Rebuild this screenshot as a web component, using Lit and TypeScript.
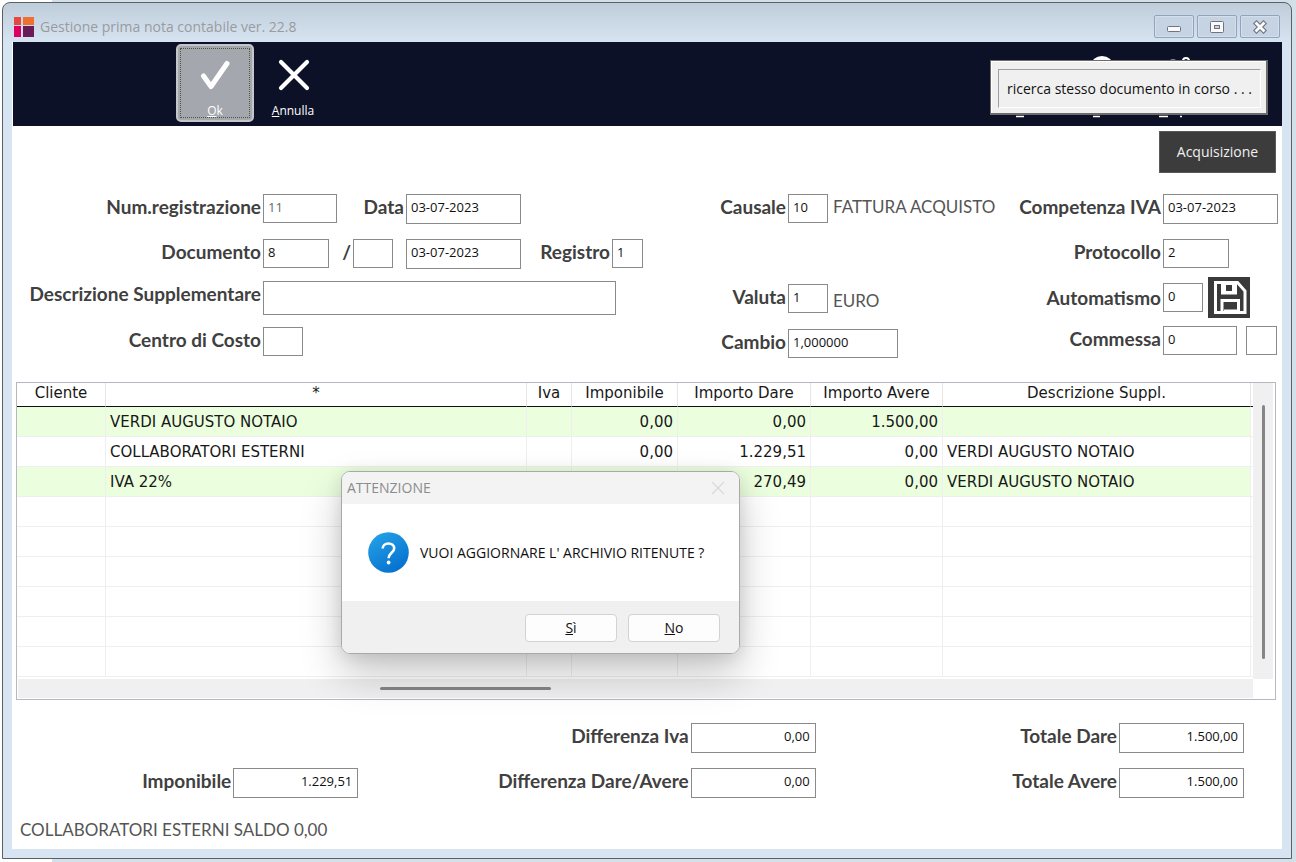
import { LitElement, html, css } from "lit";
import { customElement } from "lit/decorators.js";

interface Row {
  cliente: string;
  conto: string;
  iva: string;
  imponibile: string;
  dare: string;
  avere: string;
  descrizione: string;
}

const ROWS: Row[] = [
  { cliente: "", conto: "VERDI AUGUSTO NOTAIO", iva: "", imponibile: "0,00", dare: "0,00", avere: "1.500,00", descrizione: "" },
  { cliente: "", conto: "COLLABORATORI ESTERNI", iva: "", imponibile: "0,00", dare: "1.229,51", avere: "0,00", descrizione: "VERDI AUGUSTO NOTAIO" },
  { cliente: "", conto: "IVA 22%", iva: "", imponibile: "", dare: "270,49", avere: "0,00", descrizione: "VERDI AUGUSTO NOTAIO" },
];
const EMPTY: Row = { cliente: "", conto: "", iva: "", imponibile: "", dare: "", avere: "", descrizione: "" };
const VISIBLE_ROWS = 9;

@customElement("app-root")
export class AppRoot extends LitElement {
  static styles = css`
    :host {
      display: flex;
      min-height: 100vh;
      box-sizing: border-box;
      padding: 2px 4px 3px 2px;
      background: linear-gradient(90deg, #ffffff 52px, #d2e0ea 52px);
      font-family: Lato, "Liberation Sans", sans-serif;
      color: #404040;
    }
    * {
      box-sizing: border-box;
    }
    button,
    input {
      font: inherit;
      color: inherit;
      margin: 0;
    }
    .window {
      flex: 1;
      position: relative;
      display: flex;
      flex-direction: column;
      border: 1px solid #5c6064;
      border-radius: 8px 8px 0 0;
      background: linear-gradient(#bfcddb, #d7e4f1 40px);
      padding: 0 9px 9px;
    }
    .titlebar {
      display: flex;
      align-items: center;
      height: 39px;
      padding: 8px 2px 0 2px;
      flex: none;
    }
    .logo {
      width: 20px;
      height: 20px;
      margin-right: 6px;
    }
    .title {
      flex: 1;
      margin: 0;
      font: 400 14px/20px "Open Sans", "Noto Sans", sans-serif;
      color: #999b9f;
    }
    .controls {
      display: flex;
      gap: 3px;
    }
    .control {
      display: grid;
      place-items: center;
      width: 40px;
      height: 23px;
      padding: 0;
      border: 1px solid #93a2c0;
      border-radius: 2px;
      background: #c5d3e2;
      box-shadow: inset 0 0 0 1px #d3dfeb;
    }
    .client {
      flex: 1;
      display: flex;
      flex-direction: column;
      background: #ffffff;
    }
    .toolbar {
      display: flex;
      height: 84px;
      margin-left: 1px;
      padding: 2px 0 0 163px;
      background: #0c1127;
    }
    .tool {
      display: flex;
      flex-direction: column;
      align-items: center;
      justify-content: space-between;
      width: 78px;
      height: 78px;
      padding: 11px 0 1px;
      border: 2px solid transparent;
      border-radius: 5px;
      background: none;
      color: #ffffff;
      font: 400 12px/16px "Open Sans", "Noto Sans", sans-serif;
    }
    .tool.focused {
      position: relative;
      border-color: #c5c6ca;
      background: #a5a7af;
    }
    .tool.focused::after {
      content: "";
      position: absolute;
      inset: 2px;
      border: 1px dotted #4c5a3c;
    }
    .tool-icon {
      width: 36px;
      height: 36px;
    }
    .hidden-tools {
      width: 290px;
      height: 84px;
      margin: -2px 0 0 auto;
    }
    .actions {
      display: flex;
      justify-content: flex-end;
      padding: 5px 6px 0;
    }
    .acquire {
      width: 117px;
      height: 42px;
      border: 1px solid #5a5a5a;
      background: #3c3c3c;
      color: #f0f0f0;
      font: 400 14px/20px "Open Sans", "Noto Sans", sans-serif;
    }
    .form {
      display: flex;
      align-items: flex-start;
      padding: 21px 4px 0 0;
    }
    .group {
      display: flex;
      flex-direction: column;
    }
    .group.left {
      gap: 12px;
    }
    .group.middle {
      gap: 15px;
      margin-left: auto;
    }
    .group.right {
      gap: 8px;
      margin-left: 22px;
    }
    .line {
      display: flex;
      align-items: flex-start;
      min-height: 30px;
    }
    .line.tall {
      min-height: 33px;
    }
    .line.spaced {
      min-height: 37px;
    }
    .line.centered {
      align-items: center;
    }
    label,
    .slash {
      flex: none;
      padding-right: 2px;
      text-align: right;
      font-size: 19px;
      line-height: 26px;
      font-weight: 700;
      color: #404040;
      white-space: nowrap;
    }
    .left .lead { width: 251px; }
    .middle .lead { width: 70px; }
    .right .lead { width: 144px; }
    .for-date { width: 69px; }
    .for-register { width: 91px; }
    .slash { width: 24px; }
    input {
      height: 29px;
      min-width: 0;
      padding: 0 4px 4px;
      border: 1px solid #8a8a8a;
      border-radius: 0;
      background: #ffffff;
      color: #101010;
      outline: none;
      font: 400 13px/20px "Open Sans", "Noto Sans", sans-serif;
    }
    .readonly { color: #666a74; }
    .w31 { width: 31px; }
    .w40 { width: 40px; }
    .w66 { width: 66px; }
    .w75 { width: 74px; }
    .w110 { width: 110px; }
    .date { width: 115px; height: 30px; }
    .wide { width: 353px; height: 34px; }
    .gap { margin-left: 13px; }
    .after { margin-left: 9px; }
    .text {
      padding-left: 5px;
      font-size: 17px;
      line-height: 26px;
      color: #555555;
      white-space: nowrap;
    }
    .line.low .text { padding-top: 4px; }
    .middle .text { width: 169px; }
    .save {
      width: 42px;
      height: 41px;
      margin-left: 5px;
      padding: 0;
      border: 0;
      background: #3a3a3a;
    }
    .save svg { display: block; }
    .grid {
      display: grid;
      grid-template-columns: minmax(0, 1fr) 20px;
      grid-template-rows: auto 19px;
      margin: 23px 6px 0 4px;
      padding: 0 2px 1px 0;
      border: 1px solid #b6b7c0;
    }
    table {
      width: 100%;
      table-layout: fixed;
      border-collapse: separate;
      border-spacing: 0;
      margin-bottom: 2px;
      font-family: "DejaVu Sans", sans-serif;
      font-size: 15px;
      line-height: 20px;
      color: #181818;
    }
    th {
      height: 24px;
      padding: 0 0 3px;
      font-weight: 400;
      border-bottom: 1px solid #101010;
      border-right: 1px solid #e6e6e6;
      white-space: nowrap;
    }
    td {
      height: 30px;
      padding: 0 4px;
      border-bottom: 1px solid #efefef;
      border-right: 1px solid #efefef;
      white-space: nowrap;
    }
    th:last-child,
    td:last-child {
      border-right: 0;
      padding: 0;
    }
    .filled td:not(:last-child) { background: #ebffdf; }
    .num { text-align: right; }
    .c-cliente { width: 89px; }
    .c-iva { width: 45px; }
    .c-imponibile { width: 106px; }
    .c-dare { width: 133px; }
    .c-avere { width: 132px; }
    .c-descrizione { width: 308px; }
    .c-edge { width: 2px; }
    .vbar {
      padding: 22px 8px 20px 9px;
      background: #f0f0f0;
    }
    .hbar {
      padding: 8px 0 8px 362px;
      margin-left: 1px;
      background: #f0f0f0;
    }
    .thumb {
      border-radius: 2px;
      background: #858585;
    }
    .vbar .thumb { width: 3px; height: 100%; }
    .hbar .thumb { width: 171px; height: 3px; }
    .totals {
      display: grid;
      grid-template-columns: 346fr 457fr 428fr;
      row-gap: 15px;
      padding: 23px 38px 0 0;
    }
    .total {
      display: flex;
      justify-content: flex-end;
    }
    .total input {
      width: 125px;
      height: 30px;
      text-align: right;
      padding-right: 5px;
    }
    .status {
      margin: 17px 0 0;
      padding: 0 8px;
      font-size: 17px;
      line-height: 30px;
      color: #555555;
    }
    .notice {
      position: absolute;
      top: 57px;
      right: 23px;
      padding: 8px 5px 5px 7px;
      border: 1px solid #6c6c6c;
      border-right-width: 2px;
      border-bottom-width: 2px;
      background: #f0f0f0;
      box-shadow: inset 1px 1px 0 #ffffff;
    }
    .notice p {
      width: 263px;
      margin: 0;
      padding: 9px 0 8px;
      border: 1px solid #a0a0a0;
      border-right-color: #ffffff;
      border-bottom-color: #ffffff;
      text-align: center;
      white-space: nowrap;
      font: 400 14px/20px "Open Sans", "Noto Sans", sans-serif;
      color: #101010;
    }
    .dialog {
      position: absolute;
      top: 468px;
      left: 338px;
      width: 399px;
      overflow: hidden;
      border: 1px solid #a8aaa8;
      border-radius: 9px;
      background: #ffffff;
      color: #101010;
      font: 400 14px/20px "Open Sans", "Noto Sans", sans-serif;
    }
    .shadow {
      position: absolute;
      top: 468px;
      left: 338px;
      width: 399px;
      height: 183px;
      border-radius: 9px;
      box-shadow: 0 20px 40px rgba(0, 0, 0, 0.22), 0 2px 16px rgba(0, 0, 0, 0.1);
    }
    .dialog-head {
      display: flex;
      align-items: center;
      justify-content: space-between;
      height: 32px;
      padding: 0 14px 0 5px;
      background: #f3f3f3;
    }
    .dialog-title {
      margin: 0;
      font-size: 14px;
      font-weight: 400;
      color: #8c8c8c;
    }
    .close {
      width: 14px;
      height: 14px;
      padding: 0;
      border: 0;
      background: none;
    }
    .close svg { display: block; }
    .dialog-body {
      display: flex;
      align-items: center;
      gap: 11px;
      height: 97px;
      padding: 0 26px;
    }
    .dialog-body p {
      margin: 0;
      white-space: nowrap;
    }
    .dialog-foot {
      display: flex;
      justify-content: flex-end;
      gap: 11px;
      padding: 13px 19px 11px;
      background: #f0f0f0;
    }
    .choice {
      width: 92px;
      height: 28px;
      padding: 0;
      border: 1px solid #d2d2d2;
      border-radius: 4px;
      background: #fdfdfd;
      color: #101010;
    }
  `;

  private field(id: string, label: string, value: string, cls: string, labelCls = "lead") {
    return html`<label class=${labelCls} for=${id}>${label}</label
      ><input id=${id} class=${cls} type="text" .value=${value} />`;
  }

  private total(id: string, label: string, value: string) {
    return html`<div class="total">
      <label for=${id}>${label}</label><input id=${id} type="text" .value=${value} />
    </div>`;
  }

  private renderTitlebar() {
    return html`<header class="titlebar">
      <svg class="logo" viewBox="0 0 20 20" aria-hidden="true">
        <rect x="0" y="0" width="7" height="8" fill="#e8473f" />
        <rect x="9" y="0" width="11" height="8" fill="#f07030" />
        <rect x="0" y="9" width="7" height="11" fill="#dd0060" />
        <rect x="9" y="9" width="11" height="11" fill="#6a1c58" />
      </svg>
      <h1 class="title">Gestione prima nota contabile ver. 22.8</h1>
      <div class="controls">
        <button class="control" aria-label="Riduci a icona">
          <svg width="14" height="14" viewBox="0 0 14 14">
            <rect x="0.5" y="6.5" width="13" height="5" rx="1" fill="#fafafa" stroke="#6d7382" />
          </svg>
        </button>
        <button class="control" aria-label="Ingrandisci">
          <svg width="14" height="14" viewBox="0 0 14 14">
            <rect x="0.5" y="1.5" width="13" height="11" rx="1" fill="#fafafa" stroke="#6d7382" />
            <rect x="4.5" y="5.5" width="5" height="3" fill="#c5d3e2" stroke="#6d7382" />
          </svg>
        </button>
        <button class="control" aria-label="Chiudi finestra">
          <svg width="14" height="14" viewBox="0 0 14 14">
            <path d="M3.500 3.500l7 7M10.500 3.500l-7 7" stroke="#6d7382" stroke-width="5" stroke-linecap="square" />
            <path d="M3.500 3.500l7 7M10.500 3.500l-7 7" stroke="#fafafa" stroke-width="2.800" stroke-linecap="square" />
          </svg>
        </button>
      </div>
    </header>`;
  }

  private renderToolbar() {
    return html`<nav class="toolbar">
      <button class="tool focused">
        <svg class="tool-icon" viewBox="0 0 36 36" fill="none" stroke="#ffffff" stroke-width="5" stroke-linecap="round" stroke-linejoin="round">
          <path d="M6.500 19l7.500 10.500L30 6.500" />
        </svg>
        <span><u>O</u>k</span>
      </button>
      <button class="tool">
        <svg class="tool-icon" viewBox="0 0 36 36" fill="none" stroke="#ffffff" stroke-width="4.200" stroke-linecap="round">
          <path d="M6 5l26 26M32 5L6 31" />
        </svg>
        <span><u>A</u>nnulla</span>
      </button>
      <svg class="hidden-tools" viewBox="0 0 290 84" aria-hidden="true">
        <ellipse cx="110" cy="23" rx="11" ry="9" fill="#ffffff" />
        <circle cx="181" cy="21" r="4" fill="#8a8d98" />
        <circle cx="194" cy="19" r="3" fill="none" stroke="#ffffff" stroke-width="2" />
        <path d="M-3 73l3 -6" stroke="#7fb4e8" stroke-width="2" />
        <path d="M24 74.5h8M101 74.5h7M167 74.5h9M188 74.5h2" stroke="#ffffff" stroke-width="1.5" />
      </svg>
    </nav>`;
  }

  private renderForm() {
    return html`<form class="form">
      <div class="group left">
        <div class="line tall">
          ${this.field("numreg", "Num.registrazione", "11", "w75 readonly")}
          ${this.field("data", "Data", "03-07-2023", "date", "for-date")}
        </div>
        <div class="line">
          ${this.field("documento", "Documento", "8", "w66")}
          ${this.field("serie", "/", "", "w40", "slash")}
          <input class="date gap" type="text" aria-label="Data documento" .value=${"03-07-2023"} />
          ${this.field("registro", "Registro", "1", "w31", "for-register")}
        </div>
        <div class="line tall">${this.field("descr", "Descrizione Supplementare", "", "wide")}</div>
        <div class="line">${this.field("centro", "Centro di Costo", "", "w40")}</div>
      </div>
      <div class="group middle">
        <div class="line">
          ${this.field("causale", "Causale", "10", "w40")}
          <span class="text">FATTURA ACQUISTO</span>
        </div>
        <div class="line"></div>
        <div class="line low">
          ${this.field("valuta", "Valuta", "1", "w40")}
          <span class="text">EURO</span>
        </div>
        <div class="line">${this.field("cambio", "Cambio", "1,000000", "w110")}</div>
      </div>
      <div class="group right">
        <div class="line spaced">${this.field("competenza", "Competenza IVA", "03-07-2023", "date")}</div>
        <div class="line">${this.field("protocollo", "Protocollo", "2", "w66")}</div>
        <div class="line centered">
          ${this.field("automatismo", "Automatismo", "0", "w40")}
          <button class="save" type="button" aria-label="Salva automatismo">
            <svg width="42" height="41" viewBox="0 0 42 41">
              <path d="M7.500 5.500h22l7.500 8.500v21.500H7.500z" fill="none" stroke="#ffffff" stroke-width="3" />
              <path d="M13 5h16v12.500H13z" fill="#ffffff" />
              <path d="M18 8h6v6h-6z" fill="#3a3a3a" />
              <path d="M14 36V23.500h16.500V36" fill="none" stroke="#ffffff" stroke-width="3" />
              <path d="M16 32.500h13v4h-13z" fill="#ffffff" />
            </svg>
          </button>
        </div>
        <div class="line">
          ${this.field("commessa", "Commessa", "0", "w75")}
          <input class="w31 after" type="text" aria-label="Sottocommessa" />
        </div>
      </div>
    </form>`;
  }

  private renderGrid() {
    const rows = Array.from({ length: VISIBLE_ROWS }, (_, i) => ROWS[i] ?? EMPTY);
    return html`<section class="grid">
      <table>
        <thead>
          <tr>
            <th class="c-cliente">Cliente</th>
            <th>*</th>
            <th class="c-iva">Iva</th>
            <th class="c-imponibile">Imponibile</th>
            <th class="c-dare">Importo Dare</th>
            <th class="c-avere">Importo Avere</th>
            <th class="c-descrizione">Descrizione Suppl.</th>
            <th class="c-edge"></th>
          </tr>
        </thead>
        <tbody>
          ${rows.map(
            (r, i) => html`<tr class=${i < ROWS.length && i % 2 === 0 ? "filled" : ""}>
              <td>${r.cliente}</td>
              <td>${r.conto}</td>
              <td>${r.iva}</td>
              <td class="num">${r.imponibile}</td>
              <td class="num">${r.dare}</td>
              <td class="num">${r.avere}</td>
              <td>${r.descrizione}</td>
              <td></td>
            </tr>`
          )}
        </tbody>
      </table>
      <div class="vbar"><div class="thumb"></div></div>
      <div class="hbar"><div class="thumb"></div></div>
    </section>`;
  }

  private renderTotals() {
    return html`<section class="totals">
      <div></div>
      ${this.total("diff-iva", "Differenza Iva", "0,00")}
      ${this.total("tot-dare", "Totale Dare", "1.500,00")}
      ${this.total("imponibile", "Imponibile", "1.229,51")}
      ${this.total("diff-da", "Differenza Dare/Avere", "0,00")}
      ${this.total("tot-avere", "Totale Avere", "1.500,00")}
    </section>`;
  }

  private renderDialog() {
    return html`<div class="shadow"></div>
      <section class="dialog" role="dialog" aria-labelledby="dialog-title">
        <div class="dialog-head">
          <h2 class="dialog-title" id="dialog-title">ATTENZIONE</h2>
          <button class="close" aria-label="Chiudi">
            <svg width="14" height="14" viewBox="0 0 14 14">
              <path d="M1 1l12 12M13 1L1 13" stroke="#d8d8d8" stroke-width="1.200" />
            </svg>
          </button>
        </div>
        <div class="dialog-body">
          <svg width="41" height="41" viewBox="0 0 41 41" aria-hidden="true">
            <defs>
              <linearGradient id="badge" x1="0" y1="0" x2="0.6" y2="1">
                <stop offset="0" stop-color="#27a5e8" />
                <stop offset="1" stop-color="#0672d0" />
              </linearGradient>
            </defs>
            <circle cx="20.500" cy="20.500" r="20.300" fill="url(#badge)" />
            <path d="M14.700 16.500c0-3 2.400-5 5.700-5s5.800 2 5.800 4.900c0 4.300-5.600 4.600-5.600 9.800" fill="none" stroke="#ffffff" stroke-width="2.600" />
            <circle cx="20.600" cy="30.500" r="1.900" fill="#ffffff" />
          </svg>
          <p>VUOI AGGIORNARE L' ARCHIVIO RITENUTE ?</p>
        </div>
        <div class="dialog-foot">
          <button class="choice"><u>S</u>ì</button>
          <button class="choice"><u>N</u>o</button>
        </div>
      </section>`;
  }

  render() {
    return html`<div class="window">
      ${this.renderTitlebar()}
      <main class="client">
        ${this.renderToolbar()}
        <div class="actions"><button class="acquire">Acquisizione</button></div>
        ${this.renderForm()} ${this.renderGrid()} ${this.renderTotals()}
        <p class="status">COLLABORATORI ESTERNI SALDO 0,00</p>
      </main>
      <div class="notice" role="status"><p>ricerca stesso documento in corso . . .</p></div>
      ${this.renderDialog()}
    </div>`;
  }
}
